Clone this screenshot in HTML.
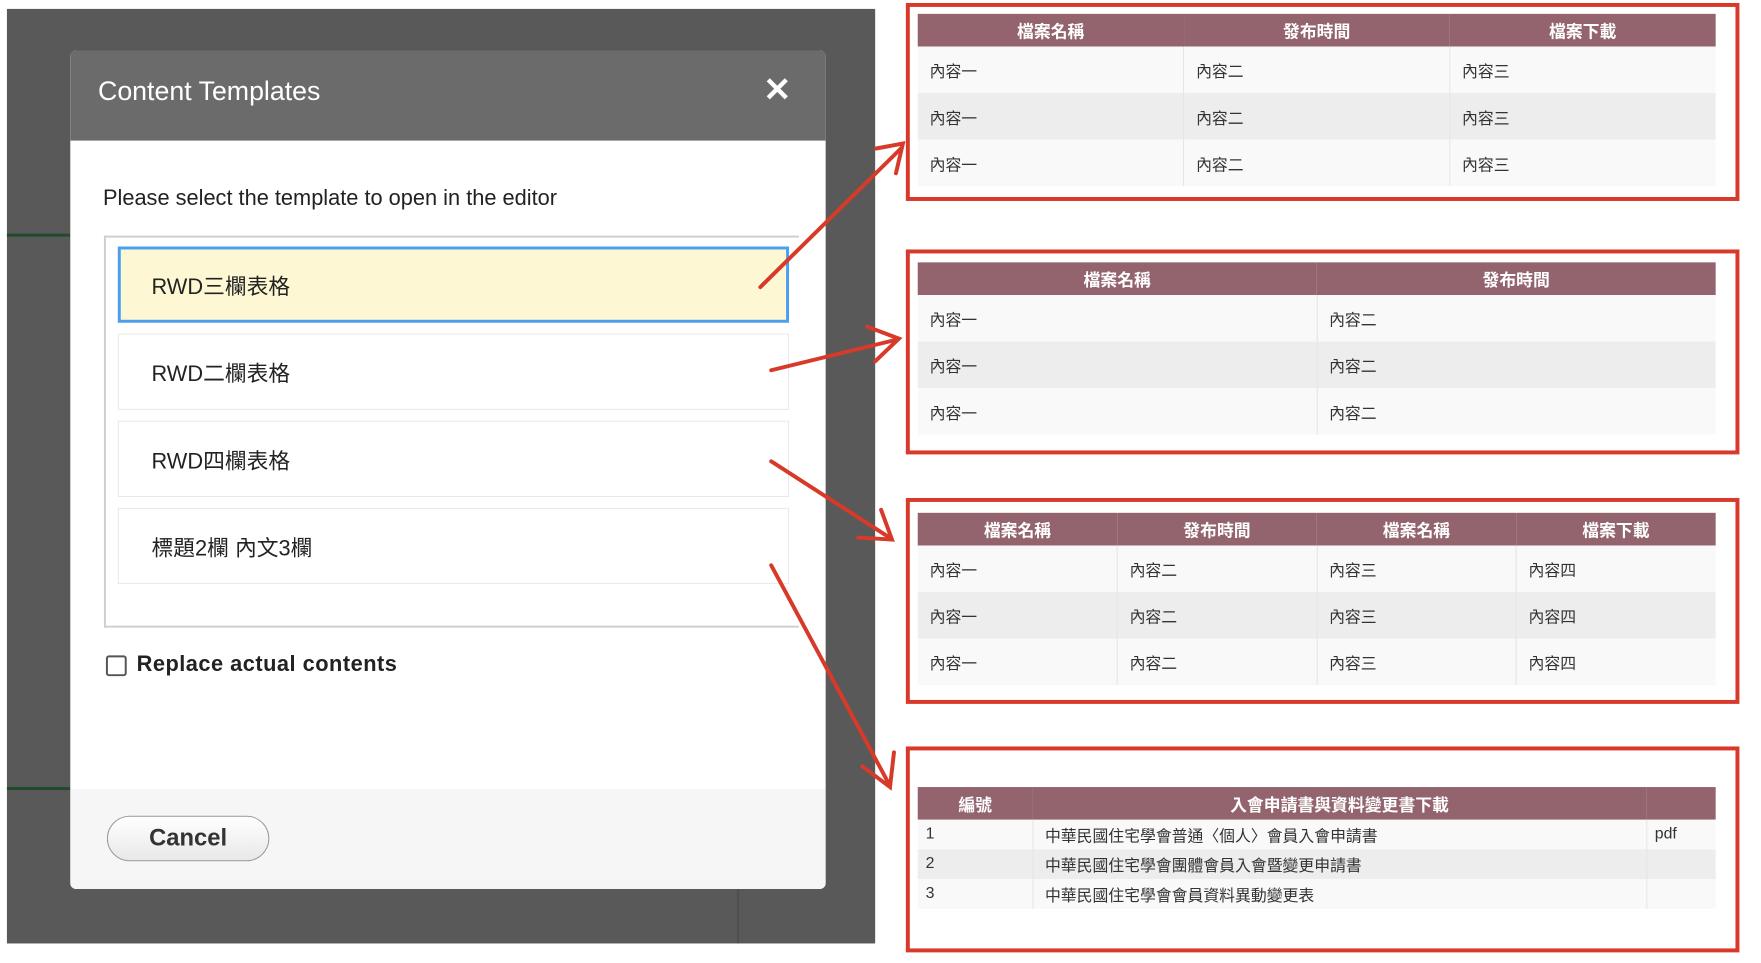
<!DOCTYPE html>
<html><head><meta charset="utf-8"><style>
*{margin:0;padding:0;box-sizing:border-box}
body{width:1761px;height:963px;background:#fff;position:relative;overflow:hidden;font-family:"Liberation Sans","Noto Sans CJK TC",sans-serif}
#w{position:absolute;left:0;top:0;width:1761px;height:963px;transform:scale(0.99);transform-origin:0 0}
.a{position:absolute}
.bg{left:7px;top:9px;width:877px;height:944px;background:#595959}
.dlg{left:71px;top:51px;width:763px;height:847px;background:#fff;border-radius:6px;overflow:hidden}
.hd{left:0;top:0;width:763px;height:91px;background:#6b6b6b}
.ttl{left:28px;top:26px;color:#fff;font-size:27px}
.x{left:700px;top:20px;color:#fff;font-size:34px;font-weight:bold}
.ft{left:0;top:746px;width:763px;height:101px;background:#f6f6f6}
.item{position:absolute;left:12px;width:678px;height:77px;border:1px solid #e8e8e8;background:#fff;font-size:22px;color:#222;padding:22px 0 0 33px}
table{position:absolute;border-collapse:collapse;font-size:16px;color:#333}
th{background:#93646e;color:#fff;font-weight:bold;font-size:17px;height:33px;border:none}
td{padding-left:12px;border-left:1px solid #e4e4e4}
td:first-child{border-left:none}
tr:nth-child(even) td{background:#f9f9f9}
tr:nth-child(odd) td{background:#ededed}
.rb{position:absolute;border:4px solid #d8392a;left:907px;width:842px}
#r{position:absolute;left:8px;top:0;width:1761px;height:963px}
</style></head><body><div id="w">
<div class="a bg"></div>
<div class="a" style="left:7px;top:236px;width:64px;height:3px;background:#1f4a2c"></div>
<div class="a" style="left:7px;top:795px;width:64px;height:3px;background:#1f4a2c"></div>
<div class="a" style="left:745px;top:898px;width:1px;height:55px;background:#444"></div>
<div class="a dlg">
 <div class="a hd"><div class="a ttl">Content Templates</div><div class="a x">✕</div></div>
 <div class="a" style="left:33px;top:136px;font-size:22px;color:#222">Please select the template to open in the editor</div>
 <div class="a" style="left:34px;top:187px;width:702px;height:396px;border:2px solid #cfcfcf;border-right:none">
  <div class="item" style="top:9px;background:#fdf8d3;border:3px solid #4a9ff0;padding-left:31px;padding-top:20px">RWD三欄表格</div>
  <div class="item" style="top:97px">RWD二欄表格</div>
  <div class="item" style="top:185px">RWD四欄表格</div>
  <div class="item" style="top:273px">標題2欄 內文3欄</div>
 </div>
 <div class="a" style="left:36px;top:611px;width:21px;height:21px;border:2px solid #555;border-radius:3px;background:#fff"></div>
 <div class="a" style="left:67px;top:607px;font-size:22px;font-weight:bold;color:#222;letter-spacing:0.5px">Replace actual contents</div>
 <div class="a ft"></div>
 <div class="a" style="left:37px;top:773px;width:164px;height:46px;border:1px solid #999;border-radius:23px;background:linear-gradient(#fff,#e8e8e8);text-align:center;line-height:44px;font-size:24px;font-weight:bold;color:#333">Cancel</div>
</div>

<div id="r">
<div class="rb" style="top:3px;height:200px"></div>
<table style="left:919px;top:14px;width:806px">
<tr><th>檔案名稱</th><th>發布時間</th><th>檔案下載</th></tr>
<tr style="height:47px"><td>內容一</td><td>內容二</td><td>內容三</td></tr>
<tr style="height:47px"><td>內容一</td><td>內容二</td><td>內容三</td></tr>
<tr style="height:47px"><td>內容一</td><td>內容二</td><td>內容三</td></tr>
</table>

<div class="rb" style="top:252px;height:207px"></div>
<table style="left:919px;top:265px;width:806px">
<tr><th>檔案名稱</th><th>發布時間</th></tr>
<tr style="height:47px"><td>內容一</td><td>內容二</td></tr>
<tr style="height:47px"><td>內容一</td><td>內容二</td></tr>
<tr style="height:47px"><td>內容一</td><td>內容二</td></tr>
</table>

<div class="rb" style="top:503px;height:208px"></div>
<table style="left:919px;top:518px;width:806px">
<tr><th>檔案名稱</th><th>發布時間</th><th>檔案名稱</th><th>檔案下載</th></tr>
<tr style="height:47px"><td>內容一</td><td>內容二</td><td>內容三</td><td>內容四</td></tr>
<tr style="height:47px"><td>內容一</td><td>內容二</td><td>內容三</td><td>內容四</td></tr>
<tr style="height:47px"><td>內容一</td><td>內容二</td><td>內容三</td><td>內容四</td></tr>
</table>

<div class="rb" style="top:754px;height:208px"></div>
<table style="left:919px;top:795px;width:806px">
<tr><th style="width:116px">編號</th><th style="text-align:center">入會申請書與資料變更書下載</th><th style="width:70px"></th></tr>
<tr style="height:30px"><td style="padding-left:8px">1</td><td>中華民國住宅學會普通〈個人〉會員入會申請書</td><td style="padding-left:8px">pdf</td></tr>
<tr style="height:30px"><td style="padding-left:8px">2</td><td>中華民國住宅學會團體會員入會暨變更申請書</td><td></td></tr>
<tr style="height:30px"><td style="padding-left:8px">3</td><td>中華民國住宅學會會員資料異動變更表</td><td></td></tr>
</table>
</div>

<svg class="a" style="left:0;top:0" width="1761" height="963">
<g stroke="#d83a2a" stroke-width="4" fill="none" stroke-linecap="round">
<path d="M768 290 L910 150"/><path d="M885 150 L912 145 L905 175"/>
<path d="M779 374 L906 343"/><path d="M876 330 L908 342 L884 365"/>
<path d="M779 466 L900 544"/><path d="M867 543 L901 545 L890 515"/>
<path d="M779 571 L898 792"/><path d="M871 774 L899 795 L903 760"/>
</g></svg>
</div></body></html>
